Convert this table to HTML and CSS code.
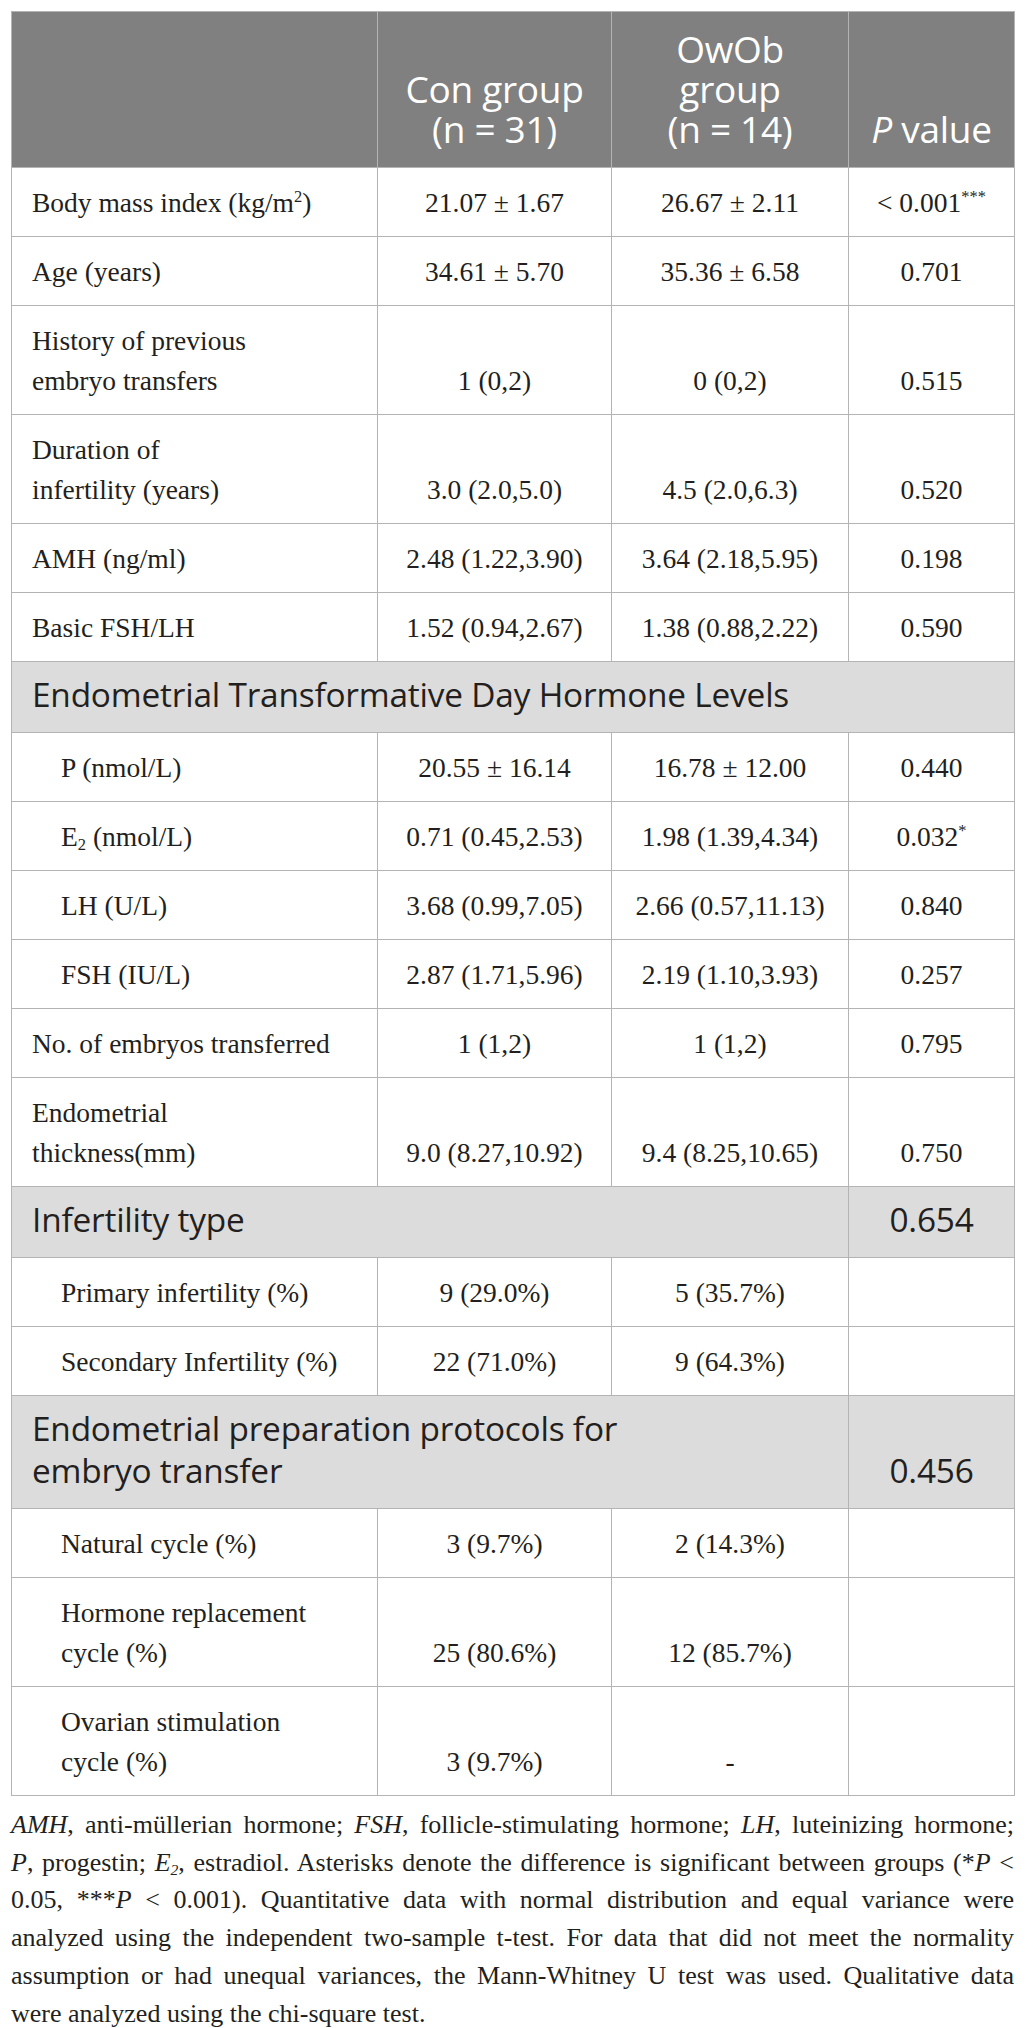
FILE: index.html
```html
<!DOCTYPE html>
<html lang="en">
<head>
<meta charset="utf-8">
<title>Table</title>
<link rel="stylesheet" href="styles.css">
</head>
<body>
<div class="wrap">
<table class="tbl">
  <colgroup>
    <col class="c1"><col class="c2"><col class="c3"><col class="c4">
  </colgroup>
  <thead>
    <tr class="head">
      <th></th>
      <th>Con group<br>(n = 31)</th>
      <th>OwOb<br>group<br>(n = 14)</th>
      <th><i>P</i> value</th>
    </tr>
  </thead>
  <tbody>
    <tr><td class="lbl">Body mass index (kg/m<sup>2</sup>)</td><td>21.07 ± 1.67</td><td>26.67 ± 2.11</td><td>&lt; 0.001<sup>***</sup></td></tr>
    <tr><td class="lbl">Age (years)</td><td>34.61 ± 5.70</td><td>35.36 ± 6.58</td><td>0.701</td></tr>
    <tr><td class="lbl">History of previous<br>embryo transfers</td><td>1 (0,2)</td><td>0 (0,2)</td><td>0.515</td></tr>
    <tr><td class="lbl">Duration of<br>infertility (years)</td><td>3.0 (2.0,5.0)</td><td>4.5 (2.0,6.3)</td><td>0.520</td></tr>
    <tr><td class="lbl">AMH (ng/ml)</td><td>2.48 (1.22,3.90)</td><td>3.64 (2.18,5.95)</td><td>0.198</td></tr>
    <tr><td class="lbl">Basic FSH/LH</td><td>1.52 (0.94,2.67)</td><td>1.38 (0.88,2.22)</td><td>0.590</td></tr>
    <tr class="sub"><td colspan="4" class="sublbl">Endometrial Transformative Day Hormone Levels</td></tr>
    <tr><td class="lbl ind">P (nmol/L)</td><td>20.55 ± 16.14</td><td>16.78 ± 12.00</td><td>0.440</td></tr>
    <tr><td class="lbl ind">E<sub>2</sub> (nmol/L)</td><td>0.71 (0.45,2.53)</td><td>1.98 (1.39,4.34)</td><td>0.032<sup>*</sup></td></tr>
    <tr><td class="lbl ind">LH (U/L)</td><td>3.68 (0.99,7.05)</td><td>2.66 (0.57,11.13)</td><td>0.840</td></tr>
    <tr><td class="lbl ind">FSH (IU/L)</td><td>2.87 (1.71,5.96)</td><td>2.19 (1.10,3.93)</td><td>0.257</td></tr>
    <tr><td class="lbl">No. of embryos transferred</td><td>1 (1,2)</td><td>1 (1,2)</td><td>0.795</td></tr>
    <tr><td class="lbl">Endometrial<br>thickness(mm)</td><td>9.0 (8.27,10.92)</td><td>9.4 (8.25,10.65)</td><td>0.750</td></tr>
    <tr class="sub"><td colspan="3" class="sublbl">Infertility type</td><td class="subp">0.654</td></tr>
    <tr><td class="lbl ind">Primary infertility (%)</td><td>9 (29.0%)</td><td>5 (35.7%)</td><td></td></tr>
    <tr><td class="lbl ind">Secondary Infertility (%)</td><td>22 (71.0%)</td><td>9 (64.3%)</td><td></td></tr>
    <tr class="sub"><td colspan="3" class="sublbl">Endometrial preparation protocols for<br>embryo transfer</td><td class="subp">0.456</td></tr>
    <tr><td class="lbl ind">Natural cycle (%)</td><td>3 (9.7%)</td><td>2 (14.3%)</td><td></td></tr>
    <tr><td class="lbl ind">Hormone replacement<br>cycle (%)</td><td>25 (80.6%)</td><td>12 (85.7%)</td><td></td></tr>
    <tr><td class="lbl ind">Ovarian stimulation<br>cycle (%)</td><td>3 (9.7%)</td><td>-</td><td></td></tr>
  </tbody>
</table>
<div class="note">
  <span class="ln"><i>AMH</i>, anti-müllerian hormone; <i>FSH</i>, follicle-stimulating hormone; <i>LH</i>, luteinizing hormone;</span>
  <span class="ln"><i>P</i>, progestin; <i>E<sub>2</sub></i>, estradiol. Asterisks denote the difference is significant between groups (*<i>P</i> &lt;</span>
  <span class="ln">0.05, ***<i>P</i> &lt; 0.001). Quantitative data with normal distribution and equal variance were</span>
  <span class="ln">analyzed using the independent two-sample t-test. For data that did not meet the normality</span>
  <span class="ln">assumption or had unequal variances, the Mann-Whitney U test was used. Qualitative data</span>
  <span class="ln last">were analyzed using the chi-square test.</span>
</div>
</div>
</body>
</html>
```

FILE: styles.css
```css
html, body {
  margin: 0;
  padding: 0;
  background: #ffffff;
}
.wrap {
  padding: 11px 12px 0 11px;
  width: 1003px;
}
.tbl {
  width: 1003px;
  border-collapse: collapse;
  table-layout: fixed;
  font-family: "Liberation Serif", "Times New Roman", serif;
  font-size: 27.5px;
  line-height: 40px;
  color: #231f20;
}
.c1 { width: 366px; }
.c2 { width: 234px; }
.c3 { width: 237px; }
.c4 { width: 166px; }
.tbl th, .tbl td {
  border: 1px solid #b4b4b4;
  padding: 15px 10px 13px 10px;
  vertical-align: bottom;
  text-align: center;
}
.tbl .head th {
  background: #7f807f;
  color: #ffffff;
  font-family: "Open Sans", sans-serif;
  font-weight: normal;
  font-size: 37px;
  line-height: 40px;
  padding: 17px 6px 18px 6px;
  letter-spacing: -0.3px;
}
.tbl td.lbl {
  text-align: left;
  padding-left: 20px;
}
.tbl td.ind {
  padding-left: 49px;
}
.tbl .sub td {
  background: #dcdcdc;
  font-family: "Open Sans", sans-serif;
  font-size: 33.4px;
  line-height: 42px;
  padding-top: 11px;
  padding-bottom: 17px;
  letter-spacing: -0.2px;
}
.tbl td.sublbl {
  text-align: left;
  padding-left: 20px;
}
sup {
  font-size: 0.6em;
  line-height: 0;
  vertical-align: 0.6em;
}
sub {
  font-size: 0.6em;
  line-height: 0;
  vertical-align: -0.25em;
}
.note {
  margin: 10px 0 0 0;
  font-family: "Liberation Serif", "Times New Roman", serif;
  font-size: 26px;
  line-height: 37.7px;
  color: #231f20;
}
.ln {
  display: block;
  text-align: justify;
  text-align-last: justify;
  white-space: nowrap;
}
.ln.last {
  text-align-last: left;
}
```
